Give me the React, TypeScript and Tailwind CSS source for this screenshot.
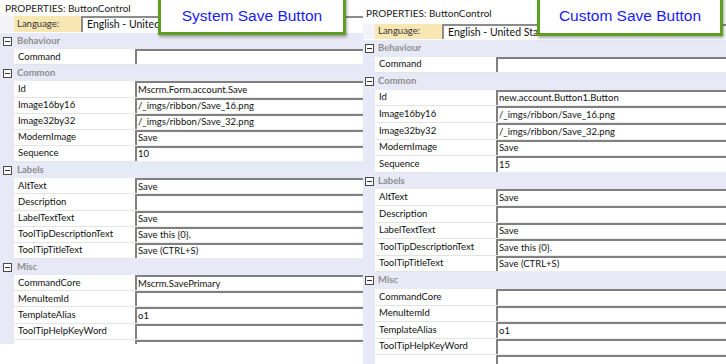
import React from "react";

type Row = { h?: string; l?: string; v?: string };

const leftRows: Row[] = [
  { h: "Behaviour" },
  { l: "Command", v: "" },
  { h: "Common" },
  { l: "Id", v: "Mscrm.Form.account.Save" },
  { l: "Image16by16", v: "/_imgs/ribbon/Save_16.png" },
  { l: "Image32by32", v: "/_imgs/ribbon/Save_32.png" },
  { l: "ModernImage", v: "Save" },
  { l: "Sequence", v: "10" },
  { h: "Labels" },
  { l: "AltText", v: "Save" },
  { l: "Description", v: "" },
  { l: "LabelTextText", v: "Save" },
  { l: "ToolTipDescriptionText", v: "Save this {0}." },
  { l: "ToolTipTitleText", v: "Save (CTRL+S)" },
  { h: "Misc" },
  { l: "CommandCore", v: "Mscrm.SavePrimary" },
  { l: "MenuItemId", v: "" },
  { l: "TemplateAlias", v: "o1" },
  { l: "ToolTipHelpKeyWord", v: "" },
  { l: "", v: "" },
];

const rightRows: Row[] = [
  { h: "Behaviour" },
  { l: "Command", v: "" },
  { h: "Common" },
  { l: "Id", v: "new.account.Button1.Button" },
  { l: "Image16by16", v: "/_imgs/ribbon/Save_16.png" },
  { l: "Image32by32", v: "/_imgs/ribbon/Save_32.png" },
  { l: "ModernImage", v: "Save" },
  { l: "Sequence", v: "15" },
  { h: "Labels" },
  { l: "AltText", v: "Save" },
  { l: "Description", v: "" },
  { l: "LabelTextText", v: "Save" },
  { l: "ToolTipDescriptionText", v: "Save this {0}." },
  { l: "ToolTipTitleText", v: "Save (CTRL+S)" },
  { h: "Misc" },
  { l: "CommandCore", v: "" },
  { l: "MenuItemId", v: "" },
  { l: "TemplateAlias", v: "o1" },
  { l: "ToolTipHelpKeyWord", v: "" },
  { l: "", v: "" },
];

const font = { fontFamily: "Lato, 'Noto Sans', sans-serif" };

function Minus() {
  return (
    <div className="w-[9px] h-[9px] border border-[#4a4a4a] bg-white flex items-center justify-center">
      <div className="w-[5px] h-px bg-[#333]" />
    </div>
  );
}

function Panel({ rows, side }: { rows: Row[]; side: "left" | "right" }) {
  const isLeft = side === "left";
  const rowH = isLeft ? "h-[16.15px]" : "h-[16.6px]";
  const strip = isLeft ? "w-[14px]" : "w-[12px]";
  return (
    <div
      className={
        isLeft
          ? "w-[363px] h-[344px] overflow-hidden shrink-0 bg-white"
          : "w-[363px] h-[364px] overflow-hidden shrink-0 bg-white pt-[5px]"
      }
      style={font}
    >
      <div
        className={
          isLeft
            ? "h-[16px] flex items-center pl-[5px] text-[10px] text-[#222]"
            : "h-[17px] flex items-center pl-[3px] text-[10px] text-[#222]"
        }
      >
        PROPERTIES: ButtonControl
      </div>
      <div className={isLeft ? "h-[16px] flex" : "h-[17px] flex pt-[2px]"}>
        <div className={`${strip} bg-[#f3f4fa]`} />
        <div className="w-[67px] bg-[#f9e7b3] pl-[3px] text-[9.5px] text-[#333] flex items-center">
          Language:
        </div>
        <div className="flex-1 border-t-2 border-l-2 border-[#8c8c8c] bg-white pl-[4px] text-[10.5px] text-[#111] flex items-center whitespace-nowrap">
          English - United States
        </div>
      </div>
      <div className="h-[1px]" />
      {rows.map((r, i) =>
        r.h ? (
          <div key={i} className={`${rowH} flex bg-[#e8e9f6]`}>
            <div className={`${strip} flex items-center justify-center`}>
              <Minus />
            </div>
            <div className="pl-[3px] flex items-center text-[9.5px] font-bold text-[#8e8e8e]">{r.h}</div>
          </div>
        ) : (
          <div key={i} className={`${rowH} flex`}>
            <div className={`${strip} bg-[#e8e9f6] shrink-0`} />
            <div className="w-[121px] shrink-0 bg-white border-b border-[#e4e4e4] pl-[4px] flex items-center text-[9.5px] text-[#111] whitespace-nowrap">
              {r.l}
            </div>
            <div className="flex-1 bg-[#ececec] pb-px">
              <div className="h-full bg-white border-t-2 border-l-2 border-[#808080] pl-[1px] flex items-center text-[9.5px] text-[#111] whitespace-nowrap">
                {r.v}
              </div>
            </div>
          </div>
        )
      )}
    </div>
  );
}

export default function App() {
  return (
    <div className="relative w-[726px] h-[364px] overflow-hidden bg-white">
      <div className="flex">
        <Panel rows={leftRows} side="left" />
        <Panel rows={rightRows} side="right" />
      </div>
      <div className="absolute left-[158px] top-[-6px] w-[188px] h-[41px] border-[3px] border-[#5e9f22] bg-white flex items-center justify-center pt-[2px] shadow-[1px_2px_3px_rgba(0,0,0,0.35)]">
        <span className="text-[15.5px] text-[#1c1cf2]" style={{ fontFamily: "'Liberation Sans', Arial, sans-serif" }}>
          System Save Button
        </span>
      </div>
      <div className="absolute left-[537px] top-[-6px] w-[186px] h-[42px] border-[3px] border-[#5e9f22] bg-white flex items-center justify-center pt-[2px] shadow-[1px_2px_3px_rgba(0,0,0,0.35)]">
        <span className="text-[15.5px] text-[#1c1cf2]" style={{ fontFamily: "'Liberation Sans', Arial, sans-serif" }}>
          Custom Save Button
        </span>
      </div>
    </div>
  );
}
